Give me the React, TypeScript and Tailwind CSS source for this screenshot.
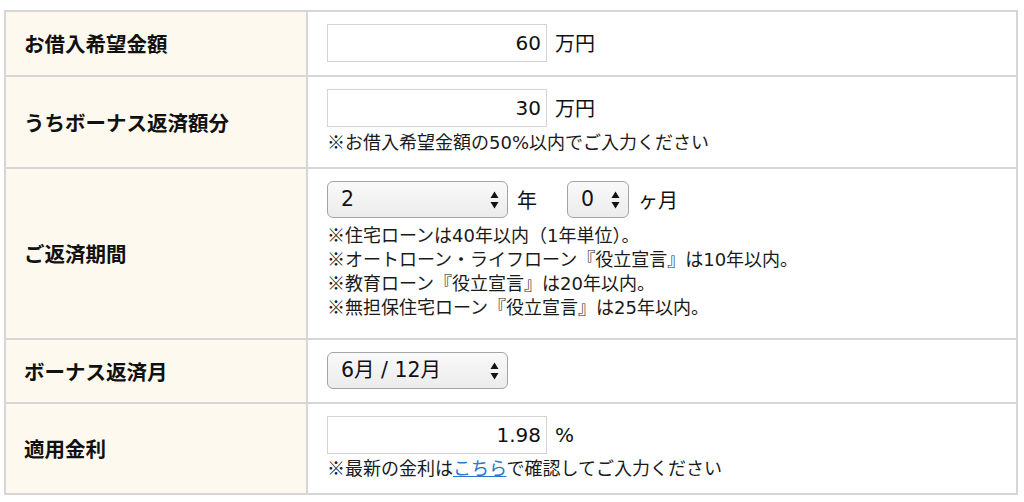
import React from "react";

const FONT = { fontFamily: '"DejaVu Sans", "Noto Sans CJK JP", sans-serif' };
const CJK = { fontFamily: '"Noto Sans CJK JP", sans-serif' };

function Arrows() {
  return (
    <svg width="9" height="18" viewBox="0 0 9 18" className="shrink-0">
      <path d="M4.5 0.5 L8.5 7 L0.5 7 Z" fill="#111" />
      <path d="M0.5 11 L8.5 11 L4.5 17.5 Z" fill="#111" />
    </svg>
  );
}

function Select({ value, width }: { value: string; width: string }) {
  return (
    <div
      className={`${width} h-[37px] shrink-0 flex items-center justify-between pl-[13px] pr-[8px] rounded-[6px] border border-[#a4a4a4] bg-gradient-to-b from-[#f9f9f9] to-[#ececec] text-[20.5px] text-[#111]`}
    >
      <span className="whitespace-pre">{value}</span>
      <Arrows />
    </div>
  );
}

function NumInput({ value }: { value: string }) {
  return (
    <div className="w-[220px] h-[38px] shrink-0 border border-[#d4d4d4] bg-white flex items-center justify-end pr-[5px] text-[20px] text-[#111]">
      {value}
    </div>
  );
}

function Note({ children }: { children: React.ReactNode }) {
  return (
    <div className="h-[24px] flex items-center text-[18px] text-[#1a1a1a] whitespace-nowrap">
      <span className="whitespace-pre">
        <span style={CJK}>※</span>
        {children}
      </span>
    </div>
  );
}

function Row({
  label,
  children,
  last,
  pb = "pb-[13px]",
}: {
  label: string;
  children: React.ReactNode;
  last?: boolean;
  pb?: string;
}) {
  return (
    <div className={`flex ${last ? "" : "border-b-2 border-[#d6d6d6]"}`}>
      <div
        className="w-[302px] shrink-0 bg-[#fdf9ee] border-r-2 border-[#d6d6d6] flex items-center pl-[18px] text-[20.5px] font-bold text-[#111]"
        style={CJK}
      >
        {label}
      </div>
      <div className={`flex-1 pl-[19px] pt-[12px] ${pb}`}>{children}</div>
    </div>
  );
}

export default function App() {
  return (
    <div className="w-[1024px] h-[502px] bg-white pt-[10px] pl-[4px]" style={FONT}>
      <div className="w-[1014px] border-2 border-[#d6d6d6]">
        <Row label="お借入希望金額">
          <div className="flex items-center h-[38px]">
            <NumInput value="60" />
            <span className="ml-[8px] text-[20px] text-[#111]" style={CJK}>万円</span>
          </div>
        </Row>
        <Row label="うちボーナス返済額分">
          <div className="flex items-center h-[38px]">
            <NumInput value="30" />
            <span className="ml-[8px] text-[20px] text-[#111]" style={CJK}>万円</span>
          </div>
          <div className="mt-[3px]">
            <Note>お借入希望金額の50%以内でご入力ください</Note>
          </div>
        </Row>
        <Row label="ご返済期間" pb="pb-[19px]">
          <div className="flex items-center h-[37px]">
            <Select value="2" width="w-[181px]" />
            <span className="ml-[9px] text-[20px] text-[#111]" style={CJK}>年</span>
            <div className="ml-[30px]">
              <Select value="0" width="w-[62px]" />
            </div>
            <span className="ml-[9px] text-[20px] text-[#111]" style={CJK}>ヶ月</span>
          </div>
          <div className="mt-[5px]">
            <Note>住宅ローンは40年以内（1年単位）。</Note>
            <Note>オートローン・ライフローン『役立宣言』は10年以内。</Note>
            <Note>教育ローン『役立宣言』は20年以内。</Note>
            <Note>無担保住宅ローン『役立宣言』は25年以内。</Note>
          </div>
        </Row>
        <Row label="ボーナス返済月">
          <Select value="6月 / 12月" width="w-[181px]" />
        </Row>
        <Row label="適用金利" last>
          <div className="flex items-center h-[38px]">
            <NumInput value="1.98" />
            <span className="ml-[8px] text-[20px] text-[#111]">%</span>
          </div>
          <div className="mt-[2px]">
            <Note>
              最新の金利は
              <a href="#" className="text-[#2a78c6] underline">こちら</a>
              で確認してご入力ください
            </Note>
          </div>
        </Row>
      </div>
    </div>
  );
}
